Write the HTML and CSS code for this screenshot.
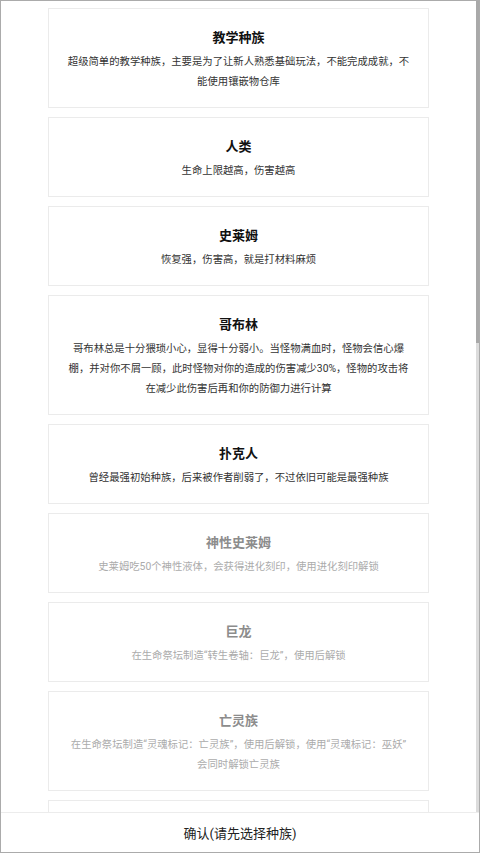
FILE: index.html
```html
<!DOCTYPE html>
<html lang="zh-CN">
<head>
<meta charset="utf-8">
<title>选择种族</title>
<link rel="stylesheet" href="styles.css">
</head>
<body>
<div class="frame">
  <div class="viewport">
    <div class="list">
      <div class="card">
        <div class="title">教学种族</div>
        <div class="desc">超级简单的教学种族，主要是为了让新人熟悉基础玩法，不能完成成就，不能使用镶嵌物仓库</div>
      </div>
      <div class="card">
        <div class="title">人类</div>
        <div class="desc">生命上限越高，伤害越高</div>
      </div>
      <div class="card">
        <div class="title">史莱姆</div>
        <div class="desc">恢复强，伤害高，就是打材料麻烦</div>
      </div>
      <div class="card">
        <div class="title">哥布林</div>
        <div class="desc">哥布林总是十分猥琐小心，显得十分弱小。当怪物满血时，怪物会信心爆棚，并对你不屑一顾，此时怪物对你的造成的伤害减少30%，怪物的攻击将在减少此伤害后再和你的防御力进行计算</div>
      </div>
      <div class="card">
        <div class="title">扑克人</div>
        <div class="desc">曾经最强初始种族，后来被作者削弱了，不过依旧可能是最强种族</div>
      </div>
      <div class="card locked">
        <div class="title">神性史莱姆</div>
        <div class="desc">史莱姆吃50个神性液体，会获得进化刻印，使用进化刻印解锁</div>
      </div>
      <div class="card locked">
        <div class="title">巨龙</div>
        <div class="desc">在生命祭坛制造“转生卷轴：巨龙”，使用后解锁</div>
      </div>
      <div class="card locked">
        <div class="title">亡灵族</div>
        <div class="desc">在生命祭坛制造“灵魂标记：亡灵族”，使用后解锁，使用“灵魂标记：巫妖”会同时解锁亡灵族</div>
      </div>
      <div class="card locked peek"></div>
    </div>
    <div class="scrollbar"><div class="thumb"></div></div>
  </div>
  <div class="confirm">确认(请先选择种族)</div>
</div>
</body>
</html>
```
FILE: styles.css
```css
html, body {
  margin: 0;
  padding: 0;
  background: #ffffff;
}

body {
  font-family: "Roboto", "Noto Sans CJK SC", sans-serif;
  color: #333333;
}

.frame {
  box-sizing: border-box;
  height: 853px;
  width: 480px;
  border: 1px solid #ababab;
  display: flex;
  flex-direction: column;
  overflow: hidden;
  background: #ffffff;
}

.viewport {
  flex: 1;
  display: flex;
  overflow: hidden;
  min-height: 0;
}

.list {
  flex: 1;
  padding-top: 7px;
  display: flex;
  flex-direction: column;
  align-items: center;
  gap: 9px;
  overflow: hidden;
}

.scrollbar {
  width: 3px;
  background: #dcdcdc;
  flex: none;
}

.thumb {
  height: 342px;
  background: #a9a9a9;
}

.card {
  box-sizing: border-box;
  width: 381px;
  flex: none;
  border: 1px solid #ebebeb;
  padding: 19px 18.2px 15px;
  text-align: center;
  background: #ffffff;
}

.card.peek {
  height: 80px;
}

.title {
  font-size: 13px;
  font-weight: 700;
  line-height: 20px;
  color: #111111;
  margin-bottom: 4px;
}

.desc {
  font-size: 10.35px;
  line-height: 20px;
  color: #333333;
}

.card.locked .title {
  color: #8c8c8c;
}

.card.locked .desc {
  color: #ababab;
}

.confirm {
  flex: none;
  height: 40px;
  box-sizing: border-box;
  border-top: 1px solid #ececec;
  display: flex;
  align-items: center;
  justify-content: center;
  font-size: 13px;
  color: #222222;
  background: #ffffff;
}
```
